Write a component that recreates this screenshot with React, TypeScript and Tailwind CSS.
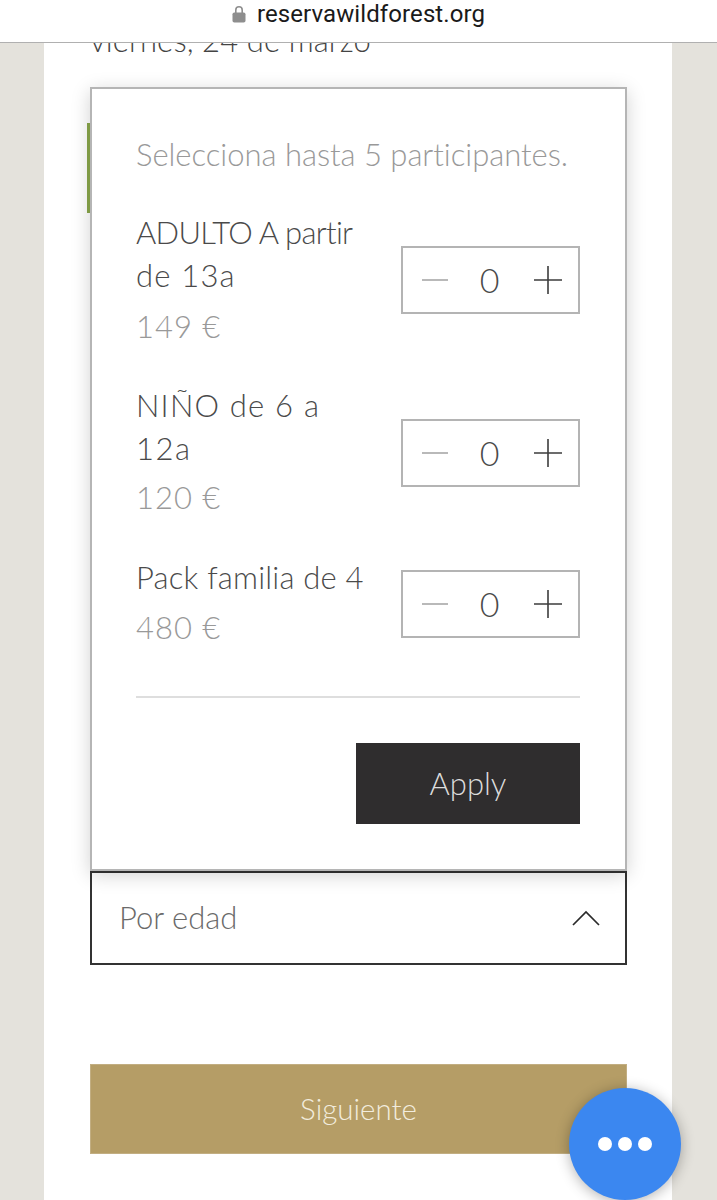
const tickets = [
  {
    id: 1,
    lines: [
      { text: "ADULTO A partir", className: "tracking-[-0.7px]" },
      { text: "de 13a", className: "tracking-[1.2px]" },
    ],
    price: "149 €",
    priceClass: "mt-[8px]",
    rowClass: "h-[130px] mt-[35px]",
    stepperClass: "mt-[35px]",
  },
  {
    id: 2,
    lines: [
      { text: "NIÑO de 6 a", className: "tracking-[1.2px]" },
      { text: "12a", className: "tracking-[1.5px]" },
    ],
    price: "120 €",
    priceClass: "mt-[6px]",
    rowClass: "h-[130px] mt-[43px]",
    stepperClass: "mt-[35px]",
  },
  {
    id: 3,
    lines: [{ text: "Pack familia de 4", className: "tracking-[0.2px]" }],
    price: "480 €",
    priceClass: "mt-[7px]",
    rowClass: "h-[87px] mt-[42px]",
    stepperClass: "mt-[14px]",
  },
];

function Stepper({ className }: { className: string }) {
  return (
    <div className={`w-[179px] h-[68px] shrink-0 border-2 border-[#b4b4b4] flex items-center justify-between pl-[19px] pr-[16px] ${className}`}>
      <svg width="26" height="26" viewBox="0 0 26 26" fill="none" stroke="#a8a8a8" strokeWidth="1.6">
        <path d="M0 13h26" />
      </svg>
      <span className="mr-[3px] text-[34px] leading-none font-light text-[#4a4a4a]">0</span>
      <svg width="28" height="28" viewBox="0 0 28 28" fill="none" stroke="#3d3d3d" strokeWidth="1.6">
        <path d="M0 14h28M14 0v28" />
      </svg>
    </div>
  );
}

export default function App() {
  return (
    <div className="relative h-[1200px] overflow-hidden flex flex-col bg-[#e4e2dc] font-['Lato',sans-serif]">
      {/* Browser address bar */}
      <header className="relative z-10 h-[43px] shrink-0 bg-white border-b border-[#b0b0b0] flex items-start justify-center gap-[11px]">
        <svg width="14" height="18" viewBox="0 0 14 18" className="mt-[5px]" fill="#8e8e8e">
          <path d="M3 8V5a4 4 0 0 1 8 0v3h-1.6V5a2.4 2.4 0 0 0-4.8 0v3z" />
          <rect x="0.5" y="7.5" width="13" height="10" rx="1.8" />
        </svg>
        <span className="font-['Roboto',sans-serif] text-[24px] leading-[28px] tracking-[0.1px] text-[#1a1a1a]">reservawildforest.org</span>
      </header>

      <main className="flex-1 overflow-hidden ml-[44px] mr-[45px] bg-white pl-[46px] pr-[45px]">
        {/* date is scrolled under the address bar */}
        <p className="-mt-[23px] text-[31px] leading-[40px] tracking-[0.1px] font-light text-[#444]">viernes, 24 de marzo</p>

        {/* Participants popup */}
        <div className="relative mt-[27px] h-[784px] border-2 border-[#b5b5b5] bg-white shadow-[0_4px_18px_rgba(0,0,0,0.18)] pl-[44px] pr-[45px] pt-[43px] z-[1]">
          <div className="absolute -left-[5px] top-[34px] w-[3px] h-[90px] bg-[#7f9a45]" />
          <p className="whitespace-nowrap text-[31px] leading-[44px] tracking-[-0.03px] font-light text-[#999]">Selecciona hasta 5 participantes.</p>

          {tickets.map((t) => (
            <div key={t.id} className={`flex justify-between ${t.rowClass}`}>
              <div>
                {t.lines.map((l) => (
                  <p key={l.text} className={`whitespace-nowrap text-[31px] leading-[43px] font-light text-[#4a4a4a] ${l.className}`}>{l.text}</p>
                ))}
                <p className={`text-[31px] leading-[43px] tracking-[1px] font-light text-[#999] ${t.priceClass}`}>{t.price}</p>
              </div>
              <Stepper className={t.stepperClass} />
            </div>
          ))}

          <div className="mt-[53px] h-[2px] bg-[#dedede]" />
          <div className="flex justify-end mt-[45px]">
            <button className="w-[224px] h-[81px] bg-[#2f2d2e] text-[#dcdcdc] text-[31px] font-light flex items-center justify-center">
              Apply
            </button>
          </div>
        </div>

        {/* Select */}
        <div className="h-[94px] border-2 border-[#333] flex items-center justify-between pl-[27px] pr-[25px] bg-white">
          <span className="-mt-[2px] text-[31px] font-light text-[#6a6a6a]">Por edad</span>
          <svg width="28" height="16" viewBox="0 0 28 16" fill="none" stroke="#2a2a2a" strokeWidth="1.7">
            <path d="M1 15 14 2l13 13" />
          </svg>
        </div>

        <button className="mt-[99px] w-full h-[90px] bg-[#b59d66] border border-[#c2ae82] text-[#f2ecdd] text-[29.5px] font-light flex items-center justify-center">
          Siguiente
        </button>
      </main>

      {/* Chat bubble */}
      <div className="absolute left-[569px] top-[1088px] w-[112px] h-[112px] rounded-full bg-[#3b87f0] shadow-[0_2px_14px_rgba(0,0,0,0.3)] flex items-center justify-center gap-[6px]">
        <span className="w-[14px] h-[14px] rounded-full bg-white" />
        <span className="w-[14px] h-[14px] rounded-full bg-white" />
        <span className="w-[14px] h-[14px] rounded-full bg-white" />
      </div>
    </div>
  );
}
